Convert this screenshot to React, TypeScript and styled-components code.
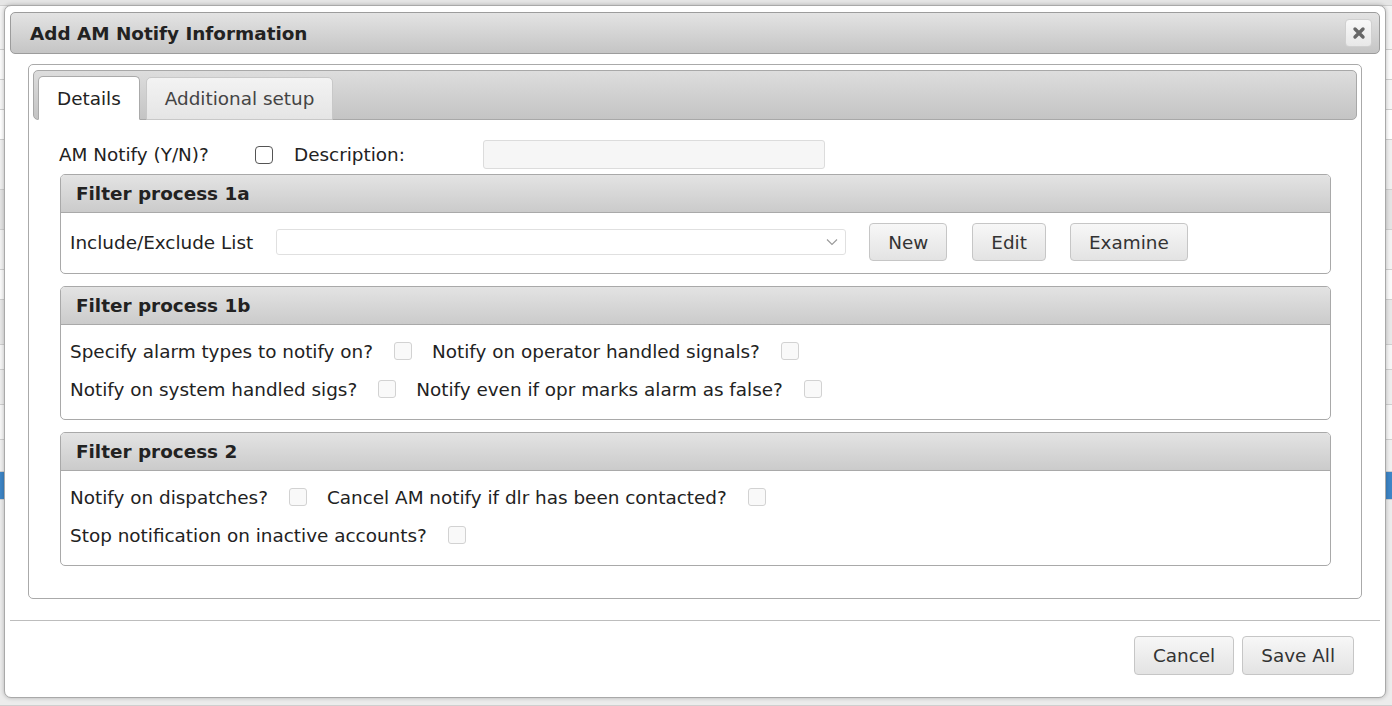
import React from 'react';
import styled, { createGlobalStyle } from 'styled-components';

const GlobalStyle = createGlobalStyle`
  html, body {
    margin: 0;
    padding: 0;
  }
  body {
    width: 1392px;
    height: 706px;
    overflow: hidden;
    background: #e9e9e9;
    font-family: "DejaVu Sans", Verdana, sans-serif;
    font-size: 18.4px;
    color: #222;
  }
  * {
    box-sizing: border-box;
  }
`;

// rows of the page that sits behind the modal
const backdropRows = [
  { h: 6, bg: '#e6e6e6' },
  { h: 44, bg: '#f4f4f4' },
  { h: 30, bg: '#fbfbfb' },
  { h: 30, bg: '#f6f6f6' },
  { h: 30, bg: '#ffffff' },
  { h: 50, bg: '#f0f0f0' },
  { h: 40, bg: '#e4e4e4' },
  { h: 40, bg: '#f3f3f3' },
  { h: 30, bg: '#fafafa' },
  { h: 45, bg: '#e8e8e8' },
  { h: 25, bg: '#f6f6f6' },
  { h: 35, bg: '#eeeeee' },
  { h: 35, bg: '#f7f7f7' },
  { h: 32, bg: '#f0f0f0' },
  { h: 28, bg: '#3d85c6' },
  { h: 206, bg: '#ececec' },
];

const Page = styled.div`
  position: relative;
  width: 1392px;
  height: 706px;
`;

const Backdrop = styled.div`
  display: flex;
  flex-direction: column;
`;

const BackdropRow = styled.div<{ $h: number; $bg: string }>`
  height: ${(p) => p.$h}px;
  background: ${(p) => p.$bg};
  border-bottom: 1px solid #cfcfcf;
`;

const Dialog = styled.div`
  position: absolute;
  top: 5px;
  left: 4px;
  width: 1382px;
  display: flex;
  flex-direction: column;
  background: #fff;
  border: 1px solid #a9a9a9;
  border-radius: 7px;
  box-shadow: 0 0 4px rgba(0, 0, 0, 0.25);
  padding: 6px 5px 0;
`;

const TitleBar = styled.div`
  height: 42px;
  display: flex;
  align-items: center;
  justify-content: space-between;
  padding: 0 7px 0 19px;
  border: 1px solid #9c9c9c;
  border-radius: 5px;
  background: linear-gradient(#e3e3e3, #c5c5c5);
`;

const Title = styled.div`
  font-weight: bold;
  color: #222;
`;

const CloseButton = styled.button`
  width: 27px;
  height: 28px;
  padding: 0;
  display: flex;
  align-items: center;
  justify-content: center;
  background: linear-gradient(#f8f8f8, #e8e8e8);
  border: 1px solid #d0d0d0;
  border-radius: 4px;
`;

const DialogBody = styled.div`
  padding: 10px 18px 21px;
`;

const Tabs = styled.div`
  border: 1px solid #aaa;
  border-radius: 5px;
  padding: 5px 4px;
`;

const TabBar = styled.div`
  height: 50px;
  display: flex;
  align-items: flex-end;
  gap: 6px;
  padding-left: 4px;
  border: 1px solid #a8a8a8;
  border-radius: 5px;
  background: linear-gradient(#dddddd, #c4c4c4);
`;

const Tab = styled.div<{ $active?: boolean }>`
  height: ${(p) => (p.$active ? 44 : 43)}px;
  margin-bottom: -1px;
  display: flex;
  align-items: center;
  padding: 0 18px;
  border: 1px solid ${(p) => (p.$active ? '#aaaaaa' : '#c8c8c8')};
  border-bottom-color: ${(p) => (p.$active ? '#ffffff' : '#c8c8c8')};
  border-radius: 5px 5px 0 0;
  background: ${(p) => (p.$active ? '#ffffff' : 'linear-gradient(#f3f3f3, #e5e5e5)')};
  color: ${(p) => (p.$active ? '#222' : '#444')};
`;

const TabPanel = styled.div`
  padding: 20px 26px 27px 27px;
`;

const TopRow = styled.div`
  height: 29px;
  display: flex;
  align-items: center;
`;

const FieldLabel = styled.span<{ $width?: number; $gap?: number }>`
  white-space: nowrap;
  ${(p) => (p.$width ? `width: ${p.$width}px; flex: none;` : '')}
  margin-left: ${(p) => p.$gap ?? 0}px;
`;

const CheckBox = styled.input.attrs({ type: 'checkbox' })<{ $strong?: boolean; $before?: number; $after?: number }>`
  appearance: none;
  flex: none;
  width: 18px;
  height: 18px;
  margin: 0 ${(p) => p.$after ?? 20}px 0 ${(p) => p.$before ?? 21}px;
  border: 1px solid ${(p) => (p.$strong ? '#555' : '#d2d2d2')};
  border-radius: ${(p) => (p.$strong ? 4 : 3)}px;
  background: ${(p) => (p.$strong ? '#fff' : '#f9f9f9')};
`;

const TextInput = styled.input`
  width: 342px;
  height: 29px;
  border: 1px solid #dcdcdc;
  border-radius: 3px;
  background: #f6f6f6;
`;

const Groups = styled.div`
  display: flex;
  flex-direction: column;
  gap: 12px;
  margin-top: 5px;
`;

const Group = styled.div`
  border: 1px solid #a9a9a9;
  border-radius: 5px;
  overflow: hidden;
`;

const GroupHeader = styled.div`
  height: 38px;
  display: flex;
  align-items: center;
  padding-left: 15px;
  font-weight: bold;
  border-bottom: 1px solid #a9a9a9;
  background: linear-gradient(#e3e3e3, #cbcbcb);
`;

const GroupBody = styled.div<{ $rows?: boolean }>`
  display: flex;
  flex-direction: column;
  gap: 8px;
  padding: ${(p) => (p.$rows ? '11px 9px 15px' : '10px 9px 12px')};
`;

const Row = styled.div<{ $tall?: boolean }>`
  height: ${(p) => (p.$tall ? 38 : 30)}px;
  display: flex;
  align-items: center;
`;

const SelectBox = styled.div`
  width: 570px;
  height: 26px;
  margin-left: 23px;
  display: flex;
  align-items: center;
  justify-content: flex-end;
  padding-right: 7px;
  border: 1px solid #e0e0e0;
  border-radius: 3px;
  background: #fff;
`;

const Button = styled.button<{ $gap?: number }>`
  height: 38px;
  padding: 0 18px;
  margin-left: ${(p) => p.$gap ?? 0}px;
  font-family: inherit;
  font-size: 18.4px;
  color: #333;
  background: linear-gradient(#f7f7f7, #e3e3e3);
  border: 1px solid #c6c6c6;
  border-radius: 4px;
`;

const Footer = styled.div`
  display: flex;
  justify-content: flex-end;
  gap: 8px;
  padding: 15px 26px 22px;
  border-top: 1px solid #bdbdbd;
`;

const FooterButton = styled(Button)`
  height: 39px;
`;

const CloseIcon = () => (
  <svg width="14" height="14" viewBox="0 0 14 14">
    <path d="M3 3 L11 11 M11 3 L3 11" stroke="#676767" strokeWidth="3.4" strokeLinecap="round" />
  </svg>
);

const Chevron = () => (
  <svg width="12" height="8" viewBox="0 0 12 8">
    <path d="M1 1.5 L6 6.5 L11 1.5" fill="none" stroke="#999" strokeWidth="1.1" />
  </svg>
);

const App = () => {
  return (
    <Page>
      <GlobalStyle />
      <Backdrop>
        {backdropRows.map((r, i) => (
          <BackdropRow key={i} $h={r.h} $bg={r.bg} />
        ))}
      </Backdrop>

      <Dialog>
        <TitleBar>
          <Title>Add AM Notify Information</Title>
          <CloseButton>
            <CloseIcon />
          </CloseButton>
        </TitleBar>

        <DialogBody>
          <Tabs>
            <TabBar>
              <Tab $active>Details</Tab>
              <Tab>Additional setup</Tab>
            </TabBar>

            <TabPanel>
              <TopRow>
                <FieldLabel $width={196} $gap={-1}>AM Notify (Y/N)?</FieldLabel>
                <CheckBox $strong $before={0} $after={21} />
                <FieldLabel $width={189}>Description:</FieldLabel>
                <TextInput />
              </TopRow>

              <Groups>
                <Group>
                  <GroupHeader>Filter process 1a</GroupHeader>
                  <GroupBody>
                    <Row $tall>
                      <FieldLabel>Include/Exclude List</FieldLabel>
                      <SelectBox>
                        <Chevron />
                      </SelectBox>
                      <Button $gap={23}>New</Button>
                      <Button $gap={25}>Edit</Button>
                      <Button $gap={24}>Examine</Button>
                    </Row>
                  </GroupBody>
                </Group>

                <Group>
                  <GroupHeader>Filter process 1b</GroupHeader>
                  <GroupBody $rows>
                    <Row>
                      <FieldLabel>Specify alarm types to notify on?</FieldLabel>
                      <CheckBox />
                      <FieldLabel>Notify on operator handled signals?</FieldLabel>
                      <CheckBox />
                    </Row>
                    <Row>
                      <FieldLabel>Notify on system handled sigs?</FieldLabel>
                      <CheckBox />
                      <FieldLabel>Notify even if opr marks alarm as false?</FieldLabel>
                      <CheckBox />
                    </Row>
                  </GroupBody>
                </Group>

                <Group>
                  <GroupHeader>Filter process 2</GroupHeader>
                  <GroupBody $rows>
                    <Row>
                      <FieldLabel>Notify on dispatches?</FieldLabel>
                      <CheckBox />
                      <FieldLabel>Cancel AM notify if dlr has been contacted?</FieldLabel>
                      <CheckBox />
                    </Row>
                    <Row>
                      <FieldLabel>Stop notification on inactive accounts?</FieldLabel>
                      <CheckBox />
                    </Row>
                  </GroupBody>
                </Group>
              </Groups>
            </TabPanel>
          </Tabs>
        </DialogBody>

        <Footer>
          <FooterButton>Cancel</FooterButton>
          <FooterButton>Save All</FooterButton>
        </Footer>
      </Dialog>
    </Page>
  );
};

export default App;
